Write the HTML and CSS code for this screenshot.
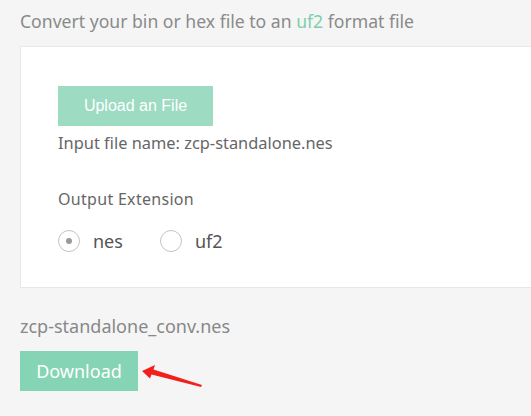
FILE: index.html
```html
<!DOCTYPE html>
<html>
<head>
<meta charset="utf-8">
<link rel="stylesheet" href="styles.css">
</head>
<body>
<div class="page">
  <h1 class="title">Convert your bin or hex file to an <span class="accent">uf2</span> format file</h1>
  <div class="card">
    <button class="upload">Upload an File</button>
    <p class="file-name">Input file name: zcp-standalone.nes</p>
    <p class="label">Output Extension</p>
    <div class="radios">
      <label class="radio"><span class="dot checked"></span>nes</label>
      <label class="radio"><span class="dot"></span>uf2</label>
    </div>
  </div>
  <p class="out-name">zcp-standalone_conv.nes</p>
  <div class="download-row">
    <button class="download">Download</button>
    <svg class="arrow" width="70" height="32" viewBox="0 0 70 32">
      <polygon points="4,11 17,5 15.5,9.5 64,25 63,27 13.5,14.5 12,18.5" fill="#f2201c"/>
    </svg>
  </div>
</div>
</body>
</html>
```
FILE: styles.css
```css
html, body {
  margin: 0;
  padding: 0;
  background: #f5f5f5;
  overflow: hidden;
}
.page {
  padding: 0 0 0 20px;
  font-family: "Noto Sans", "Open Sans", sans-serif;
  color: #888;
}
.title {
  margin: 0;
  padding-top: 8px;
  font-size: 17.6px;
  font-weight: normal;
  line-height: 26px;
  color: #8a8a8a;
}
.accent {
  color: #7dcfae;
}
.card {
  margin-top: 12px;
  margin-right: -40px;
  background: #fff;
  border: 1px solid #e8e8e8;
  padding: 39px 37px 35px;
  height: 242px;
  box-sizing: border-box;
}
.upload {
  display: block;
  width: 155px;
  height: 40px;
  border: none;
  background: #9ddbc3;
  color: #fff;
  font-family: "Liberation Sans", Arial, sans-serif;
  font-size: 16px;
  padding: 0;
  margin: 0;
}
.file-name {
  margin: 6px 0 0;
  font-size: 16.4px;
  line-height: 22px;
  color: #666;
}
.label {
  margin: 34px 0 0;
  font-size: 16px;
  letter-spacing: 0.3px;
  line-height: 22px;
  color: #666;
}
.radios {
  display: flex;
  gap: 37px;
  margin-top: 18px;
}
.radio {
  display: flex;
  align-items: center;
  gap: 13px;
  font-size: 18px;
  color: #555;
  line-height: 26px;
}
.dot {
  width: 20px;
  height: 20px;
  border: 1px solid #c4c4c4;
  border-radius: 50%;
  display: flex;
  align-items: center;
  justify-content: center;
}
.dot.checked::after {
  content: "";
  width: 6px;
  height: 6px;
  border-radius: 50%;
  background: #999;
}
.out-name {
  margin: 26px 0 0;
  font-size: 18px;
  line-height: 24px;
  color: #888;
}
.download-row {
  display: flex;
  align-items: flex-start;
  margin-top: 13px;
}
.download {
  width: 118px;
  height: 40px;
  border: none;
  background: #85d4b5;
  color: #fff;
  font-family: "Noto Sans", sans-serif;
  font-size: 18px;
  padding: 0;
}
.arrow {
  margin-top: 9px;
}
```
